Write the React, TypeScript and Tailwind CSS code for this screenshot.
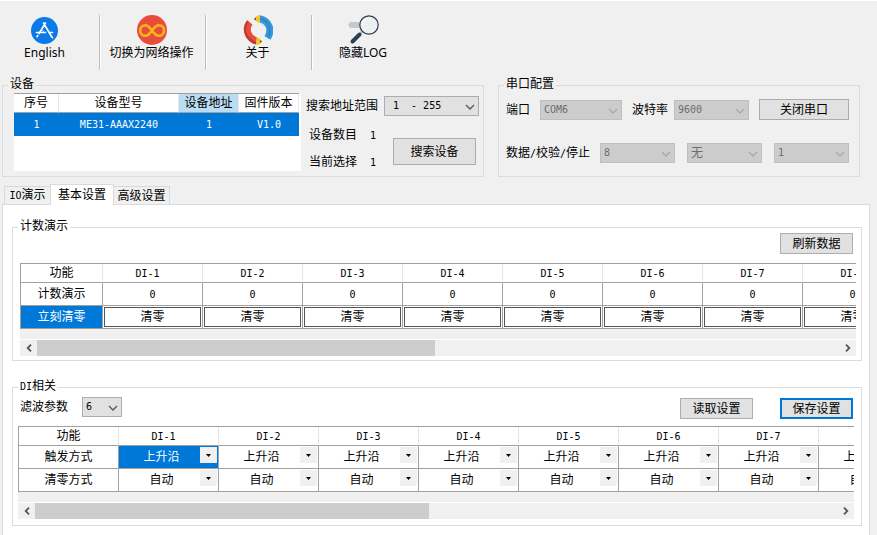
import type { ReactNode } from "react";
import { clsx } from "clsx";

const MONO = "[font-family:'DejaVu_Sans_Mono','Noto_Sans_CJK_SC',monospace] text-[10px]";

function Mono({ children }: { children: ReactNode }) {
  return <span className={MONO}>{children}</span>;
}

function StoreIcon() {
  return (
    <svg viewBox="0 0 27 27" className="h-[27px] w-[27px]" fill="none">
      <circle cx="13.5" cy="13.5" r="13.5" fill="#0a7ae6" />
      <g stroke="#fff" strokeWidth="1.6" strokeLinecap="round">
        <path d="M14.5 6 8 16.500M12.500 6 20.500 19.500M5.500 15.500h9M18.500 15.500h3" />
        <path d="M6.800 18.500l-.8 1.200M20.500 19.500l1 1.200" />
      </g>
      <path d="M10 12l3.500 3.500" stroke="#bcdcff" strokeWidth="1" />
    </svg>
  );
}

function InfinityIcon() {
  return (
    <svg viewBox="0 0 30 30" className="h-[30px] w-[30px]" fill="none">
      <circle cx="15" cy="15" r="15" fill="#e94c3d" />
      <path
        d="M15 15.500C12.500 12 11 10.200 8.500 10.200a5.300 5.300 0 0 0 0 10.600C11 20.800 12.500 19 15 15.500S19 10.200 21.800 10.200a5.300 5.300 0 0 1 0 10.600C19 20.800 17.500 19 15 15.500Z"
        stroke="#f2b817"
        strokeWidth="2.600"
      />
    </svg>
  );
}

function PencilsIcon() {
  return (
    <svg viewBox="0 0 30 30" className="h-[30px] w-[30px]" fill="none">
      <path d="M7 7.500C2 13 4 23 13.500 26" stroke="#e94c3d" strokeWidth="7" />
      <path d="M4 5.500C-1.500 13 1 26 13 29.500l.7-2.500C4 24 0.500 14 5.500 7Z" fill="#c0392b" />
      <path d="M16.500 3.800C26 5.500 29.500 15 24.500 23" stroke="#3498db" strokeWidth="7" />
      <path d="M17 3.500c8 1.500 12 10 8.500 18" stroke="#2f86c8" strokeWidth="2" />
      <path d="M17 0v7.500l-3-.5-2.500-3 2-3Z" fill="#f2c52c" />
      <path d="M13 2.500 11 4l1.500 1.500Z" fill="#2c3e50" />
      <path d="M13.500 22.500 13 30l3.500-.5 2.500-3-2.500-3Z" fill="#f2c52c" />
      <path d="M17.500 25 19 26.500l-2 1.500Z" fill="#2c3e50" />
    </svg>
  );
}

function SearchLogIcon() {
  return (
    <svg viewBox="0 0 31 30" className="h-[30px] w-[31px]" fill="none">
      <rect x="0.500" y="7" width="16" height="6" rx="3" fill="#c3c9cd" />
      <path d="M14.500 16 11.500 19.500" stroke="#b9bfc4" strokeWidth="2.500" />
      <path d="M11.500 19.500 4.500 26.500" stroke="#2c3e55" strokeWidth="4" strokeLinecap="round" />
      <circle cx="21" cy="10" r="9.200" fill="#ecf0f1" stroke="#2c3e55" strokeWidth="1.200" />
      <path d="M14.500 10a6.500 6.500 0 0 1 5-6.300" stroke="#fff" strokeWidth="1.500" />
    </svg>
  );
}

function Chevron({ className }: { className?: string }) {
  return (
    <svg viewBox="0 0 10 6" className={clsx("h-[6px] w-[10px]", className)} fill="none">
      <path d="M1 1l4 4 4-4" stroke="currentColor" strokeWidth="1.300" />
    </svg>
  );
}

function Combo({ label, value, width, disabled }: { label: string; value: string; width: string; disabled?: boolean }) {
  return (
    <span className={clsx("relative inline-block h-5 shrink-0", width)}>
      <select
        aria-label={label}
        disabled={disabled}
        className={clsx(
          MONO,
          "block h-full w-full appearance-none border leading-[18px] opacity-100",
          label === "搜索地址范围" ? "pl-2" : "pl-[3px]",
          value === "无" && "text-[12px]",
          disabled ? "border-[#bfbfbf] bg-[#cccccc] text-[#6d6d6d]" : "border-[#adadad] bg-[#e1e1e1] text-black",
        )}
      >
        <option>{value}</option>
      </select>
      <Chevron
        className={clsx(
          "pointer-events-none absolute right-1 top-2",
          disabled ? "text-[#a8a8a8]" : "text-[#555]",
        )}
      />
    </span>
  );
}

function PushButton({ children, size, focused }: { children: ReactNode; size: string; focused?: boolean }) {
  return (
    <button
      type="button"
      className={clsx(
        "flex shrink-0 items-center justify-center bg-[#e1e1e1] leading-4",
        focused ? "border-2 border-[#0078d7]" : "border border-[#adadad]",
        size,
      )}
    >
      {children}
    </button>
  );
}

function Group({ title, className, children }: { title: ReactNode; className?: string; children: ReactNode }) {
  return (
    <fieldset className={clsx("min-w-0 border border-[#dcdcdc] px-[5px]", className)}>
      <legend className="h-[11px] px-[2px] leading-[9px]">{title}</legend>
      {children}
    </fieldset>
  );
}

function ToolButton({ icon, label, last, className }: { icon: ReactNode; label: string; last?: boolean; className: string }) {
  return (
    <button
      type="button"
      className={clsx(
        "flex h-[55px] flex-col items-center text-[12px] leading-4",
        !last && "border-r border-[#bdbdbd] shadow-[1px_0_0_#fff]",
        className,
      )}
    >
      <span className="flex h-[30px] items-center">{icon}</span>
      <span className="whitespace-nowrap">{label}</span>
    </button>
  );
}

function ScrollBar({ thumb }: { thumb: string }) {
  return (
    <div className="mt-[10px] border-t border-white">
      <div className="flex h-4 items-center bg-[#f0f0f0] text-[#555]">
        <button type="button" aria-label="向左滚动" className="flex h-4 w-[17px] items-center justify-center">
          <svg viewBox="0 0 6 8" className="h-2 w-[6px]" fill="none">
            <path d="M5 .7 1.700 4 5 7.300" stroke="currentColor" strokeWidth="1.800" />
          </svg>
        </button>
        <div className="h-4 flex-1">
          <div className={clsx("h-4 bg-[#cdcdcd]", thumb)} />
        </div>
        <button type="button" aria-label="向右滚动" className="flex h-4 w-[17px] items-center justify-center">
          <svg viewBox="0 0 6 8" className="h-2 w-[6px]" fill="none">
            <path d="M1 .7 4.300 4 1 7.300" stroke="currentColor" strokeWidth="1.800" />
          </svg>
        </button>
      </div>
    </div>
  );
}

const channels = ["DI-1", "DI-2", "DI-3", "DI-4", "DI-5", "DI-6", "DI-7", "DI-8"];
const HEAD = "h-[19px] border-b border-r border-b-[#a0a0a0] border-r-[#e5e5e5] p-0 font-normal leading-4";
const CELL = "h-[23px] border-b border-r border-[#a0a0a0] p-0 text-center leading-4";
const GRID = "table-fixed border-separate border-spacing-0 border-l border-t border-[#a0a0a0] bg-white";

function HeadRow({ first }: { first: string }) {
  return (
    <thead>
      <tr>
        <th className={clsx(HEAD, first)}>功能</th>
        {channels.map((name, i) => (
          <th key={name} className={clsx(HEAD, "w-[100px]", i === 0 && "pr-[10px]")}>
            <Mono>{name}</Mono>
          </th>
        ))}
      </tr>
    </thead>
  );
}

function CounterTable() {
  return (
    <table className={clsx(GRID, "w-[883px]")}>
      <HeadRow first="w-[82px]" />
      <tbody>
        <tr>
          <td className={CELL}>计数演示</td>
          {channels.map((name) => (
            <td key={name} className={CELL}>
              <Mono>0</Mono>
            </td>
          ))}
        </tr>
        <tr>
          <td className={clsx(CELL, "bg-[#0078d7] text-white")}>立刻清零</td>
          {channels.map((name) => (
            <td key={name} className={CELL}>
              <button type="button" className="mx-auto block h-5 w-[97px] border border-[#555] bg-white leading-[18px]">
                清零
              </button>
            </td>
          ))}
        </tr>
      </tbody>
    </table>
  );
}

function CellSelect({ label, value, selected }: { label: string; value: string; selected?: boolean }) {
  return (
    <div className={clsx("relative h-[22px]", selected && "bg-[#0078d7] text-white")}>
      <select
        aria-label={label}
        className="block h-full w-full appearance-none bg-transparent pr-[14px] text-center leading-[22px] [text-align-last:center]"
      >
        <option>{value}</option>
      </select>
      <span className="pointer-events-none absolute right-px top-px flex h-4 w-[17px] items-center justify-center bg-[#f0f0f0]">
        <svg viewBox="0 0 5 3" className="h-[3px] w-[5px]">
          <path d="M0 0h5L2.500 3z" fill="#000" />
        </svg>
      </span>
    </div>
  );
}

function InputTable() {
  const rows = [
    { name: "触发方式", value: "上升沿" },
    { name: "清零方式", value: "自动" },
  ];
  return (
    <table className={clsx(GRID, "w-[901px]")}>
      <HeadRow first="w-[100px]" />
      <tbody>
        {rows.map((row, r) => (
          <tr key={row.name}>
            <td className={CELL}>{row.name}</td>
            {channels.map((name, i) => (
              <td key={name} className={CELL}>
                <CellSelect label={`${name} ${row.name}`} value={row.value} selected={r === 0 && i === 0} />
              </td>
            ))}
          </tr>
        ))}
      </tbody>
    </table>
  );
}

function DeviceTable() {
  return (
    <div className="h-[78px] w-[287px] shrink-0 bg-white">
      <table className="w-[285px] table-fixed border-separate border-spacing-0 border-t border-[#a0a0a0] text-center">
        <thead>
          <tr>
            <th className={clsx(HEAD, "w-[45px]")}>序号</th>
            <th className={clsx(HEAD, "w-[120px]")}>设备型号</th>
            <th className={clsx(HEAD, "w-[60px] bg-[#bcdcf4]")}>设备地址</th>
            <th className={clsx(HEAD, "w-[60px]")}>固件版本</th>
          </tr>
        </thead>
        <tbody>
          <tr className="bg-[#0078d7] text-white">
            {["1", "ME31-AAAX2240", "1", "V1.0"].map((text, i) => (
              <td key={i} className="h-[23px] p-0 leading-4">
                <Mono>{text}</Mono>
              </td>
            ))}
          </tr>
        </tbody>
      </table>
    </div>
  );
}

export default function App() {
  return (
    <div className="flex min-h-screen flex-col overflow-hidden border-t border-white bg-[#f0f0f0] text-[12px] text-black [font-family:'Liberation_Sans','Noto_Sans_CJK_SC',sans-serif]">
      <header className="flex h-[79px] shrink-0 pt-[14px] [font-family:'Noto_Sans','Noto_Sans_CJK_SC',sans-serif]">
        <ToolButton icon={<StoreIcon />} label="English" className="w-[100px] pr-[10px]" />
        <ToolButton icon={<InfinityIcon />} label="切换为网络操作" className="w-[106px] pr-[2px]" />
        <ToolButton icon={<PencilsIcon />} label="关于" className="w-[106px] pr-[2px]" />
        <ToolButton icon={<SearchLogIcon />} label="隐藏LOG" className="w-[102px]" last />
      </header>

      <div className="flex gap-[14px] pl-[2px]">
        <Group title="设备" className="w-[482px] shrink-0 pb-[5px] pt-[2px]">
          <div className="flex gap-[5px] pl-[6px]">
            <DeviceTable />
            <div className="flex flex-1 flex-col leading-4">
              <div className="mt-[3px] flex items-center gap-[6px]">
                <span className="whitespace-nowrap">搜索地址范围</span>
                <Combo label="搜索地址范围" value={"1\u00a0\u00a0-\u00a0255"} width="w-[95px]" />
              </div>
              <div className="flex pl-[3px]">
                <dl className="mt-[11px] grid w-[84px] grid-cols-[61px_auto] content-start gap-y-[10px]">
                  <dt>设备数目</dt>
                  <dd><Mono>1</Mono></dd>
                  <dt>当前选择</dt>
                  <dd><Mono>1</Mono></dd>
                </dl>
                <div className="mt-[22px]">
                  <PushButton size="h-[27px] w-[83px]">搜索设备</PushButton>
                </div>
              </div>
            </div>
          </div>
        </Group>

        <Group title="串口配置" className="w-[362px] shrink-0 pt-[8px]">
          <div className="flex items-center pl-[2px]">
            <span className="w-[34px]">端口</span>
            <Combo label="端口" value="COM6" width="w-[82px]" disabled />
            <span className="ml-[10px] w-[42px]">波特率</span>
            <Combo label="波特率" value="9600" width="w-[75px]" disabled />
            <span className="ml-[10px]">
              <PushButton size="h-[21px] w-[90px]">关闭串口</PushButton>
            </span>
          </div>
          <div className="mt-[23px] flex items-center pl-[2px]">
            <span className="w-[94px]">
              数据<Mono>/</Mono>校验<Mono>/</Mono>停止
            </span>
            <div className="flex gap-[12px]">
              <Combo label="数据" value="8" width="w-[75px]" disabled />
              <Combo label="校验" value="无" width="w-[75px]" disabled />
              <Combo label="停止" value="1" width="w-[75px]" disabled />
            </div>
          </div>
        </Group>
      </div>

      <nav className="mt-[7px] flex shrink-0 items-end pl-1 leading-4" role="tablist">
        <button type="button" role="tab" className="h-[18px] w-[46px] border border-b-0 border-r-0 border-[#d9d9d9]">
          <Mono>IO</Mono>演示
        </button>
        <button
          type="button"
          role="tab"
          aria-selected="true"
          className="z-10 -mb-px h-[21px] w-[64px] border border-b-0 border-[#d9d9d9] bg-white"
        >
          基本设置
        </button>
        <button type="button" role="tab" className="h-[18px] w-[56px] border border-b-0 border-l-0 border-[#d9d9d9]">
          高级设置
        </button>
      </nav>

      <main className="ml-[2px] mr-[7px] flex-1 border border-b-0 border-[#dcdcdc] bg-white pl-[9px] pr-[7px] pt-[17px]">
        <Group title="计数演示" className="pb-1">
          <div className="flex justify-end pr-[3px]">
            <PushButton size="h-[21px] w-[73px]">刷新数据</PushButton>
          </div>
          <div className="ml-[2px] mt-[9px] bg-[#f0f0f0]">
            <div className="overflow-hidden">
              <CounterTable />
            </div>
            <ScrollBar thumb="w-[49.6%]" />
          </div>
        </Group>

        <Group title={<><Mono>DI</Mono>相关</>} className="mt-[21px] pb-[6px]">
          <div className="flex items-start justify-between pl-[2px] pr-[3px] pt-1">
            <div className="flex items-center gap-[14px]">
              <span>滤波参数</span>
              <Combo label="滤波参数" value="6" width="w-[40px]" />
            </div>
            <div className="flex gap-[27px] pt-px">
              <PushButton size="h-[21px] w-[73px]">读取设置</PushButton>
              <PushButton size="h-[21px] w-[73px]" focused>保存设置</PushButton>
            </div>
          </div>
          <div className="mr-[2px] mt-[7px] bg-[#f0f0f0]">
            <div className="overflow-hidden">
              <InputTable />
            </div>
            <ScrollBar thumb="w-[49.1%]" />
          </div>
        </Group>
      </main>
    </div>
  );
}
